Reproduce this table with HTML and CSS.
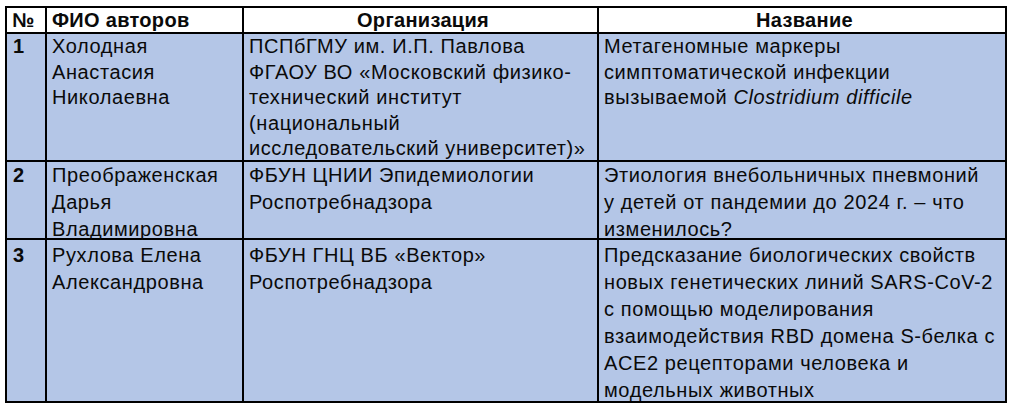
FILE: index.html
```html
<!DOCTYPE html>
<html lang="ru">
<head>
<meta charset="utf-8">
<link rel="stylesheet" href="styles.css">
</head>
<body>
<table class="grid">
  <colgroup>
    <col class="c-num">
    <col class="c-name">
    <col class="c-org">
    <col class="c-title">
  </colgroup>
  <thead>
    <tr class="head">
      <th class="left">№</th>
      <th class="left">ФИО авторов</th>
      <th>Организация</th>
      <th>Название</th>
    </tr>
  </thead>
  <tbody>
    <tr class="r1">
      <td class="num"><div class="cell">1</div></td>
      <td><div class="cell">Холодная<br>Анастасия<br>Николаевна</div></td>
      <td><div class="cell">ПСПбГМУ им. И.П. Павлова<br>ФГАОУ ВО «Московский физико-<br>технический институт<br>(национальный<br>исследовательский университет)»</div></td>
      <td><div class="cell">Метагеномные маркеры<br>симптоматической инфекции<br>вызываемой <i>Clostridium difficile</i></div></td>
    </tr>
    <tr class="r2">
      <td class="num"><div class="cell">2</div></td>
      <td><div class="cell">Преображенская<br>Дарья<br>Владимировна</div></td>
      <td><div class="cell">ФБУН ЦНИИ Эпидемиологии<br>Роспотребнадзора</div></td>
      <td><div class="cell">Этиология внебольничных пневмоний<br>у детей от пандемии до 2024 г. – что<br>изменилось?</div></td>
    </tr>
    <tr class="r3">
      <td class="num"><div class="cell">3</div></td>
      <td><div class="cell">Рухлова Елена<br>Александровна</div></td>
      <td><div class="cell">ФБУН ГНЦ ВБ «Вектор»<br>Роспотребнадзора</div></td>
      <td><div class="cell">Предсказание биологических свойств<br>новых генетических линий SARS-CoV-2<br>с помощью моделирования<br>взаимодействия RBD домена S-белка с<br>ACE2 рецепторами человека и<br>модельных животных</div></td>
    </tr>
  </tbody>
</table>
</body>
</html>
```

FILE: styles.css
```css
html, body {
  margin: 0;
  padding: 0;
  background: #ffffff;
}
body {
  padding: 6px 0 0 5px;
  font-family: "Liberation Sans", Arial, sans-serif;
  color: #0a0a0a;
}
.grid {
  border-collapse: collapse;
  table-layout: fixed;
  width: 1002px;
  border: 2px solid #000;
}
.c-num { width: 40px; }
.c-name { width: 197px; }
.c-org { width: 355px; }
.c-title { width: 408px; }
.grid th, .grid td {
  border: 2px solid #000;
  padding: 0 0 0 5px;
  vertical-align: top;
  white-space: nowrap;
}
.grid th {
  font-size: 20px;
  letter-spacing: 0.3px;
  font-weight: bold;
  text-align: center;
  background: #ffffff;
  height: 24px;
  line-height: 24px;
}
.grid th.left { text-align: left; }
.grid td {
  background: #b4c6e7;
  font-size: 20px;
  letter-spacing: 0.6px;
}
.cell {
  overflow: visible;
}
.grid td.num { font-weight: bold; letter-spacing: 0; padding-left: 6px; }
.r1 .cell { height: 126px; line-height: 25.6px; }
.r2 .cell { height: 76px; line-height: 27px; }
.r3 .cell { height: 161px; line-height: 27px; padding-top: 2px; }
.r3 .cell { height: 159px; }
```
